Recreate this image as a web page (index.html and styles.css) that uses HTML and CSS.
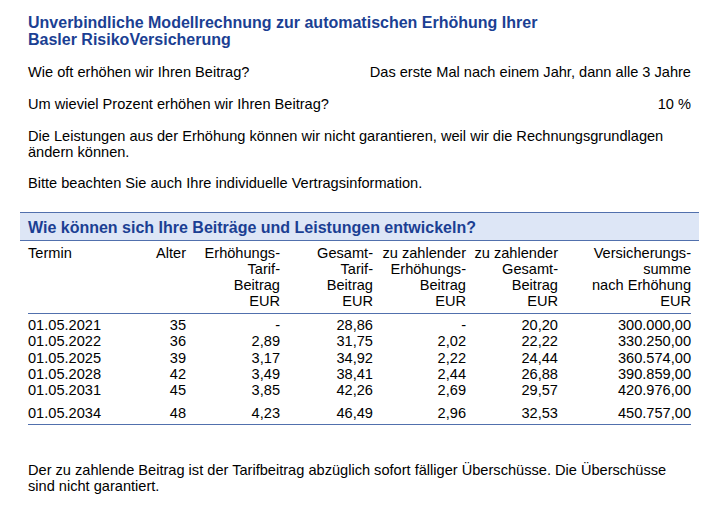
FILE: index.html
```html
<!DOCTYPE html>
<html lang="de">
<head>
<meta charset="utf-8">
<title>Modellrechnung</title>
<link rel="stylesheet" href="styles.css">
</head>
<body>
<div class="page">
  <h1 class="title">Unverbindliche Modellrechnung zur automatischen Erhöhung Ihrer<br>Basler RisikoVersicherung</h1>

  <div class="qa qa-first">
    <span>Wie oft erhöhen wir Ihren Beitrag?</span>
    <span>Das erste Mal nach einem Jahr, dann alle 3 Jahre</span>
  </div>
  <div class="qa">
    <span>Um wieviel Prozent erhöhen wir Ihren Beitrag?</span>
    <span>10 %</span>
  </div>

  <p class="text">Die Leistungen aus der Erhöhung können wir nicht garantieren, weil wir die Rechnungsgrundlagen<br>ändern können.</p>
  <p class="text">Bitte beachten Sie auch Ihre individuelle Vertragsinformation.</p>

  <section class="block">
    <h2 class="band">Wie können sich Ihre Beiträge und Leistungen entwickeln?</h2>
    <div class="table">
      <div class="grid thead">
        <div class="l">Termin</div>
        <div>Alter</div>
        <div>Erhöhungs-<br>Tarif-<br>Beitrag<br>EUR</div>
        <div>Gesamt-<br>Tarif-<br>Beitrag<br>EUR</div>
        <div>zu zahlender<br>Erhöhungs-<br>Beitrag<br>EUR</div>
        <div>zu zahlender<br>Gesamt-<br>Beitrag<br>EUR</div>
        <div>Versicherungs-<br>summe<br>nach Erhöhung<br>EUR</div>
      </div>
      <div class="rows">
        <div class="grid row"><div class="l">01.05.2021</div><div>35</div><div>-</div><div>28,86</div><div>-</div><div>20,20</div><div>300.000,00</div></div>
        <div class="grid row"><div class="l">01.05.2022</div><div>36</div><div>2,89</div><div>31,75</div><div>2,02</div><div>22,22</div><div>330.250,00</div></div>
        <div class="grid row"><div class="l">01.05.2025</div><div>39</div><div>3,17</div><div>34,92</div><div>2,22</div><div>24,44</div><div>360.574,00</div></div>
        <div class="grid row"><div class="l">01.05.2028</div><div>42</div><div>3,49</div><div>38,41</div><div>2,44</div><div>26,88</div><div>390.859,00</div></div>
        <div class="grid row"><div class="l">01.05.2031</div><div>45</div><div>3,85</div><div>42,26</div><div>2,69</div><div>29,57</div><div>420.976,00</div></div>
        <div class="grid row row-last"><div class="l">01.05.2034</div><div>48</div><div>4,23</div><div>46,49</div><div>2,96</div><div>32,53</div><div>450.757,00</div></div>
      </div>
    </div>
  </section>

  <p class="text footer">Der zu zahlende Beitrag ist der Tarifbeitrag abzüglich sofort fälliger Überschüsse. Die Überschüsse<br>sind nicht garantiert.</p>
</div>
</body>
</html>
```

FILE: styles.css
```css
html, body {
  margin: 0;
  background: #ffffff;
}

body {
  font-family: "Liberation Sans", Arial, sans-serif;
  font-size: 14.6px;
  line-height: 16px;
  color: #000000;
}

.page {
  width: 679px;
  margin-left: 20px;
}

.title {
  margin: 13.5px 0 0;
  padding: 0 8px;
  font-size: 16px;
  line-height: 17.3px;
  font-weight: bold;
  color: #1b3f93;
}

.qa {
  display: flex;
  justify-content: space-between;
  padding: 0 8px;
  margin-top: 16px;
}

.qa-first {
  margin-top: 16.2px;
}

.text {
  margin: 15.5px 0 0;
  padding: 0 8px;
}

.block {
  margin-top: 21px;
}

.band {
  margin: 0;
  padding: 2px 8px 0;
  font-size: 16px;
  line-height: 25px;
  font-weight: bold;
  color: #1b3f93;
  background: #dde6f6;
  border-top: 1.6px solid #5170ad;
  border-bottom: 1.6px solid #5170ad;
}

.table {
  padding: 0 8px;
}

.grid {
  display: grid;
  grid-template-columns: 112px 46px 94px 93px 93px 92px 133px;
  text-align: right;
}

.grid .l {
  text-align: left;
}

.thead {
  margin-top: 3.8px;
  padding-bottom: 4px;
  border-bottom: 1.6px solid #5170ad;
}

.rows {
  padding-top: 3px;
  padding-bottom: 2.7px;
  border-bottom: 1.6px solid #5170ad;
  line-height: 16.25px;
}

.row-last {
  margin-top: 7px;
}

.footer {
  margin-top: 36.5px;
}
```
